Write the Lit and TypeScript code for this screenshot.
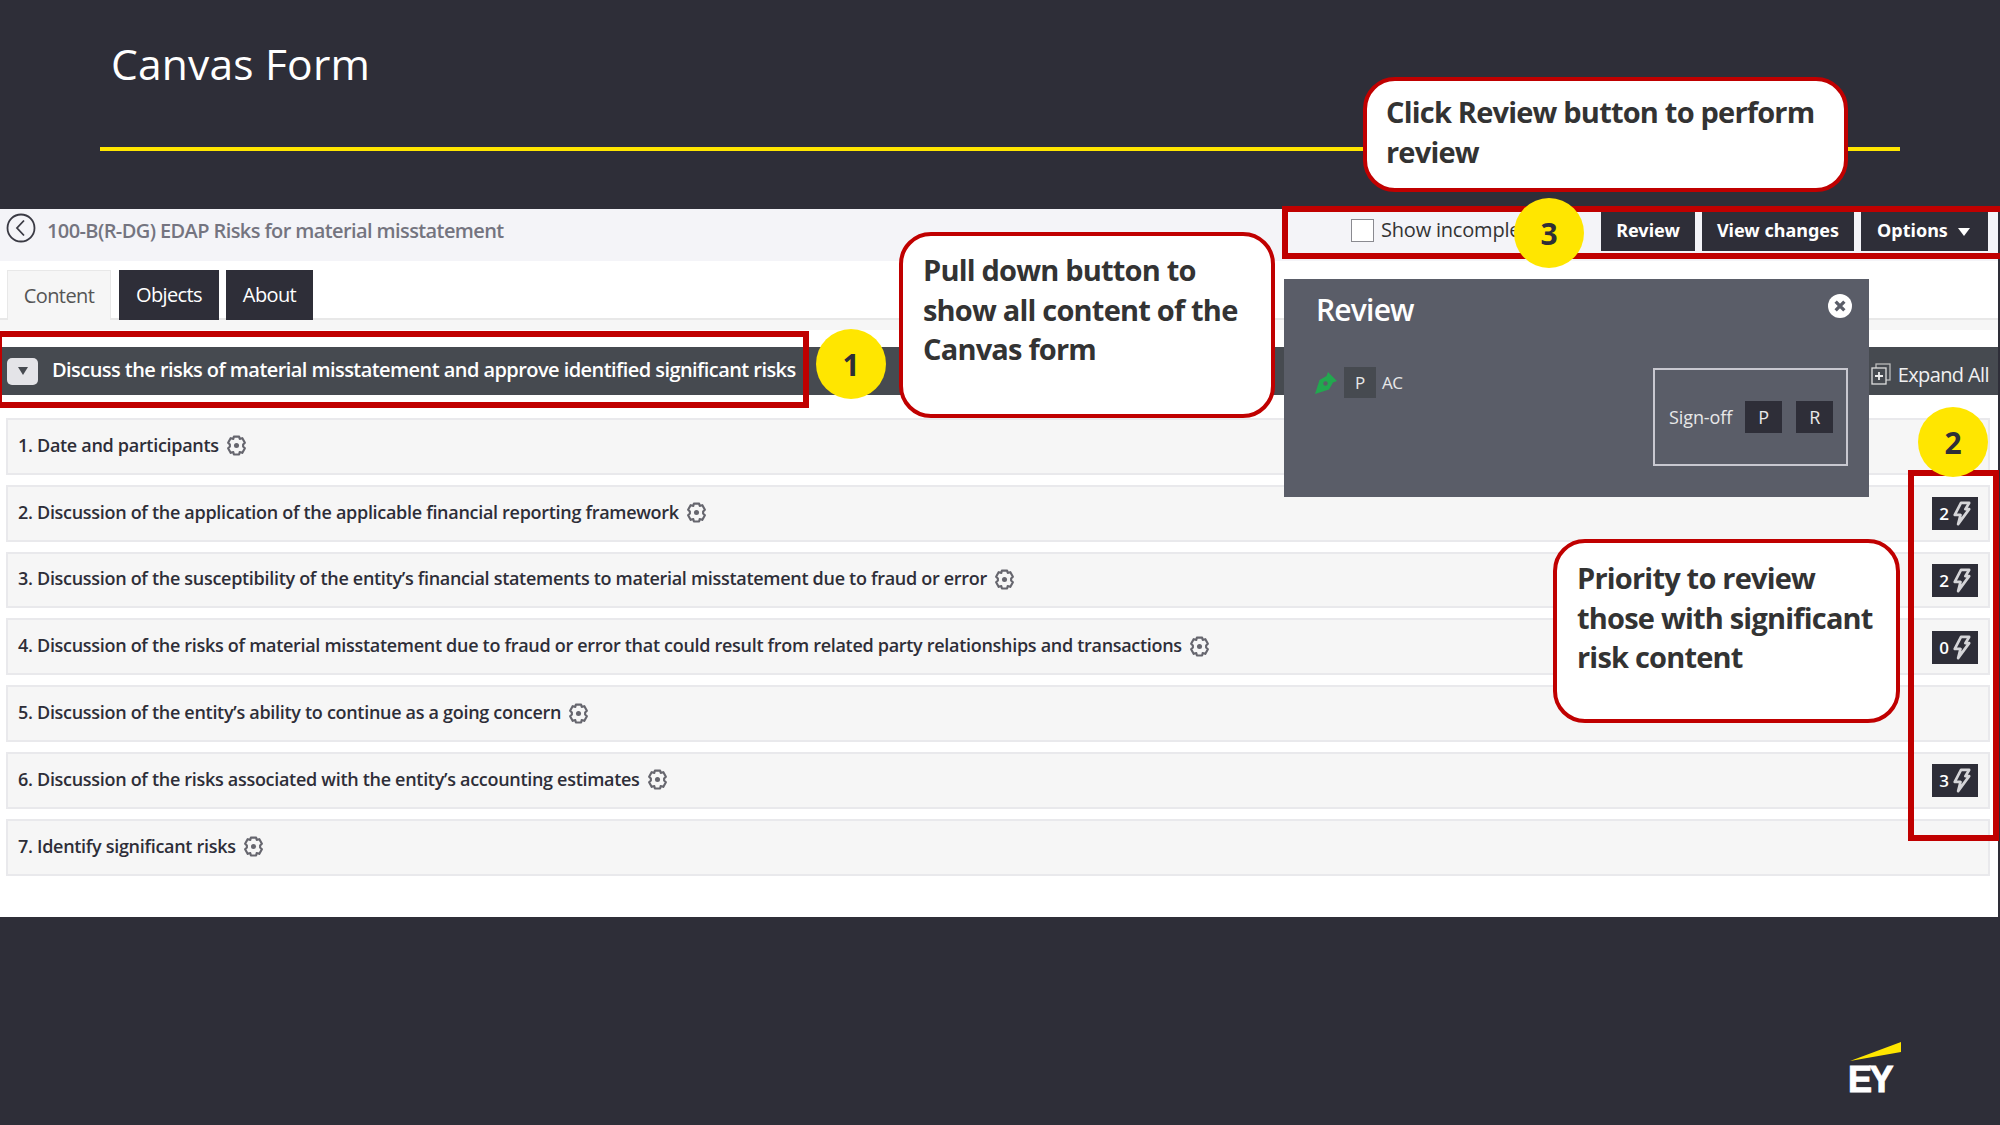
import { LitElement, html, css, svg } from "lit";
import { customElement } from "lit/decorators.js";

const rows: { t: string; n?: number }[] = [
  { t: "1. Date and participants" },
  { t: "2. Discussion of the application of the applicable financial reporting framework", n: 2 },
  { t: "3. Discussion of the susceptibility of the entity’s financial statements to material misstatement due to fraud or error", n: 2 },
  { t: "4. Discussion of the risks of material misstatement due to fraud or error that could result from related party relationships and transactions", n: 0 },
  { t: "5. Discussion of the entity’s ability to continue as a going concern" },
  { t: "6. Discussion of the risks associated with the entity’s accounting estimates", n: 3 },
  { t: "7. Identify significant risks" },
];

const gear = svg`<svg class="gear" viewBox="0 0 20 20" width="21" height="23"><path d="M7.500 1.500h5l.5 2.200 2.500-.7 2.500 4.300-1.700 1.700v2l1.700 1.700-2.500 4.300-2.500-.7-.5 2.200h-5l-.5-2.200-2.500.7L2 12.700l1.700-1.700V9L2 7.300 4.500 3l2.500.7z" fill="none" stroke="#66666e" stroke-width="2" stroke-linejoin="round"/><circle cx="10" cy="10" r="2.400" fill="#66666e"/></svg>`;
const bolt = svg`<svg viewBox="0 0 20 26" width="20" height="25"><path d="M10 2h8.500l-4 6.500H18.500L7 24l2.500-9.500H3.500z" fill="none" stroke="#d5d5d8" stroke-width="2.800" stroke-linejoin="round"/></svg>`;

@customElement("app-root")
export class AppRoot extends LitElement {
  static styles = css`
    :host { display: block; width: 2000px; height: 1125px; position: relative; overflow: hidden; background: #2e2e38; font-family: "Open Sans", "Noto Sans", sans-serif; }
    .head { height: 209px; box-sizing: border-box; padding: 35px 100px 0; color: #fff; }
    .head h1 { margin: 0 0 0 11px; font-size: 42.500px; font-weight: 400; line-height: 58px; height: 60px; letter-spacing: 0.2px; }
    .rule { height: 4px; background: #ffe600; margin-top: 52px; }
    .panel { width: 1998px; height: 708px; background: #fff; display: flex; flex-direction: column; }
    .top { height: 52px; background: #f4f4f8; display: flex; align-items: center; padding-left: 6px; color: #747480; font-size: 20px; font-weight: 600; letter-spacing: -0.6px; flex: none; }
    .back { margin-right: 11px; flex: none; margin-top: -14px; }
    .title { flex: 1; margin-top: -9px; }
    .tools { display: flex; align-items: center; align-self: stretch; padding: 3px 10px 10px 0; gap: 7px; color: #333; letter-spacing: -0.2px; font-size: 20px; }
    .chk { width: 23px; height: 23px; background: #fff; border: 1px solid #8a8a90; box-sizing: border-box; margin-top: -2px; }
    .show { width: 213px; font-weight: 500; color: #333; margin-top: -4px; white-space: nowrap; overflow: hidden; }
    .btn { background: #2e2e38; color: #fff; height: 39px; box-sizing: border-box; padding-bottom: 3px; display: flex; align-items: center; justify-content: center; font-weight: 700; font-family: "Noto Sans", sans-serif; font-size: 18px; letter-spacing: 0; }
    .b1 { width: 94px; } .b2 { width: 152px; } .b3 { width: 127px; gap: 10px; padding-right: 2px; }
    .caret { width: 0; height: 0; border: 6px solid transparent; border-top: 8px solid #fff; border-bottom: 0; margin-top: 3px; }
    .tabs { display: flex; height: 59px; padding: 9px 0 0 7px; box-sizing: border-box; gap: 7px; border-bottom: 2px solid #e8e8e8; flex: none; font-size: 20px; letter-spacing: -0.6px; }
    .tab { background: #2e2e38; color: #fff; display: flex; align-items: center; justify-content: center; height: 50px; padding-bottom: 1px; box-sizing: border-box; }
    .tab.on { background: #f6f6f6; color: #555; border: 1px solid #e8e8e8; border-bottom: 0; width: 104px; margin-right: 1px; }
    .t2 { width: 100px; } .t3 { width: 87px; }
    .gapband { height: 27px; flex: none; background: linear-gradient(#f6f6f6 0 10px, #fff 10px); }
    .bar { height: 48px; background: #464a50; color: #fff; display: flex; align-items: center; padding-left: 7px; font-size: 20px; font-weight: 600; letter-spacing: -0.56px; flex: none; }
    .tri { width: 31px; height: 27px; background: #e4e4e8; border-radius: 5px; display: flex; align-items: center; justify-content: center; margin-right: 14px; flex: none; }
    .tri i { width: 0; height: 0; border: 5px solid transparent; border-top: 8px solid #464a50; border-bottom: 0; }
    .bartext { flex: 1; margin-top: -3px; }
    .expand { display: flex; align-items: center; gap: 7px; margin: 6px 9px 0 0; font-weight: 400; letter-spacing: -0.6px; color: #f0f0f0; font-size: 20px; }
    .rows { display: flex; flex-direction: column; gap: 10px; padding: 23px 8px 0 6px; }
    .row { height: 56.800px; box-sizing: border-box; background: #f6f6f6; border: 2px solid #e9e9ec; display: flex; align-items: center; padding: 0 10px 0 10px; font-size: 18px; font-weight: 600; letter-spacing: -0.3px; color: #2e2e38; }
    .gear { margin-left: 7px; flex: none; margin-top: -1px; }
    .txt { margin-top: -3px; }
    .badge { margin-left: auto; margin-top: 1px; width: 46px; height: 33px; background: #2e2e38; color: #fff; display: flex; align-items: center; justify-content: center; gap: 2px; font-size: 17px; font-weight: 600; letter-spacing: 0; }
    .logo { position: absolute; left: 1850px; top: 1042px; width: 52px; height: 54px; }
    .logo b { position: absolute; left: -2px; top: 19px; font: 700 36px/37px "Liberation Sans", sans-serif; letter-spacing: -2.500px; color: #fff; -webkit-text-stroke: 1px #fff; }
    .logo svg { position: absolute; left: 0; top: 0; }
    .redbox { position: absolute; border: 6px solid #c00000; box-sizing: border-box; }
    .r1 { left: -4px; top: 331px; width: 813px; height: 77px; }
    .r2 { left: 1282px; top: 206px; width: 730px; height: 53px; }
    .r3 { left: 1908px; top: 470px; width: 91px; height: 371px; }
    .call { position: absolute; background: #fff; border: 4px solid #c00000; border-radius: 32px; box-sizing: border-box; color: #333; font-size: 29px; font-weight: 700; line-height: 39.500px; padding: 14px 14px 14px 20px; letter-spacing: -0.8px; }
    .c1 { left: 1363px; top: 77px; width: 485px; height: 115px; padding-top: 11px; padding-left: 19px; }
    .c2 { left: 899px; top: 232px; width: 376px; height: 186px; padding-top: 14px; }
    .c3 { left: 1553px; top: 539px; width: 347px; height: 184px; padding-top: 15px; }
    .num { position: absolute; width: 70px; height: 70px; border-radius: 50%; background: #ffe600; color: #2e2e38; display: flex; align-items: center; justify-content: center; font: 700 30px "Open Sans", sans-serif; }
    .n1 { left: 816px; top: 329px; } .n2 { left: 1918px; top: 407px; } .n3 { left: 1514px; top: 198px; }
    .review { position: absolute; left: 1284px; top: 279px; width: 585px; height: 218px; background: #5a5d68; color: #fff; }
    .review h2 { margin: 0; position: absolute; left: 32px; top: 10px; font-size: 30px; font-weight: 600; letter-spacing: -0.8px; }
    .x { position: absolute; left: 544px; top: 15px; width: 24px; height: 24px; }
    .who { position: absolute; left: 30px; top: 88px; display: flex; align-items: center; gap: 6px; font-size: 17px; letter-spacing: -0.4px; color: #e8e8e8; }
    .pb { width: 32px; height: 31px; background: #464a50; display: flex; align-items: center; justify-content: center; font-size: 17px; }
    .sign { position: absolute; left: 369px; top: 89px; width: 195px; height: 98px; border: 2px solid #c8c8d0; box-sizing: border-box; display: flex; align-items: center; padding-left: 14px; gap: 13px; font-size: 18px; letter-spacing: -0.1px; color: #e8e8e8; }
    .sb { width: 37px; height: 32px; background: #2e2e38; display: flex; align-items: center; justify-content: center; margin-right: 1px; }
  `;

  render() {
    return html`
      <div class="head">
        <h1>Canvas Form</h1>
        <div class="rule"></div>
      </div>
      <div class="panel">
        <div class="top">
          <svg class="back" viewBox="0 0 30 30" width="30" height="30"><circle cx="15" cy="15" r="13.500" fill="none" stroke="#3a3a44" stroke-width="1.800"/><path d="M18 7.500L11 15l7 7.500" fill="none" stroke="#3a3a44" stroke-width="1.800"/></svg>
          <span class="title">100-B(R-DG) EDAP Risks for material misstatement</span>
          <div class="tools">
            <span class="chk"></span>
            <span class="show">Show incomplete</span>
            <span class="btn b1">Review</span>
            <span class="btn b2">View changes</span>
            <span class="btn b3">Options <i class="caret"></i></span>
          </div>
        </div>
        <div class="tabs">
          <span class="tab on">Content</span>
          <span class="tab t2">Objects</span>
          <span class="tab t3">About</span>
        </div>
        <div class="gapband"></div>
        <div class="bar">
          <span class="tri"><i></i></span>
          <span class="bartext">Discuss the risks of material misstatement and approve identified significant risks</span>
          <span class="expand">
            <svg viewBox="0 0 20 22" width="20" height="22"><rect x="5" y="1" width="14" height="16" fill="none" stroke="#bbb" stroke-width="1.300"/><rect x="1" y="5" width="14" height="16" fill="#464a50" stroke="#ddd" stroke-width="1.300"/><path d="M8 9v8M4 13h8" stroke="#eee" stroke-width="1.800"/></svg>
            Expand All
          </span>
        </div>
        <div class="rows">
          ${rows.map(
            (r) => html`<div class="row">
              <span class="txt">${r.t}</span>${gear}
              ${r.n !== undefined ? html`<span class="badge">${r.n}${bolt}</span>` : ""}
            </div>`
          )}
        </div>
      </div>
      <div class="logo">
        <svg width="52" height="20" viewBox="0 0 52 20"><path d="M0 19L51 0v10z" fill="#ffe600"/></svg>
        <b>EY</b>
      </div>
      <div class="redbox r1"></div>
      <div class="redbox r2"></div>
      <div class="redbox r3"></div>
      <div class="review">
        <h2>Review</h2>
        <svg class="x" viewBox="0 0 22 22"><circle cx="11" cy="11" r="11" fill="#fff"/><path d="M7 7l8 8M15 7l-8 8" stroke="#5a5d68" stroke-width="3"/></svg>
        <div class="who">
          <svg viewBox="0 0 24 24" width="24" height="26"><path d="M14 1l9 9-4 1.500-4 7L1 23l4.500-14 7-4z" fill="#22a84f"/><circle cx="11.500" cy="12.500" r="2.200" fill="#5a5d68"/></svg>
          <span class="pb">P</span><span>AC</span>
        </div>
        <div class="sign"><span>Sign-off</span><span class="sb">P</span><span class="sb">R</span></div>
      </div>
      <div class="call c1">Click Review button to perform review</div>
      <div class="call c2">Pull down button to show all content of the Canvas form</div>
      <div class="call c3">Priority to review those with significant risk content</div>
      <div class="num n1">1</div>
      <div class="num n2">2</div>
      <div class="num n3">3</div>
    `;
  }
}
